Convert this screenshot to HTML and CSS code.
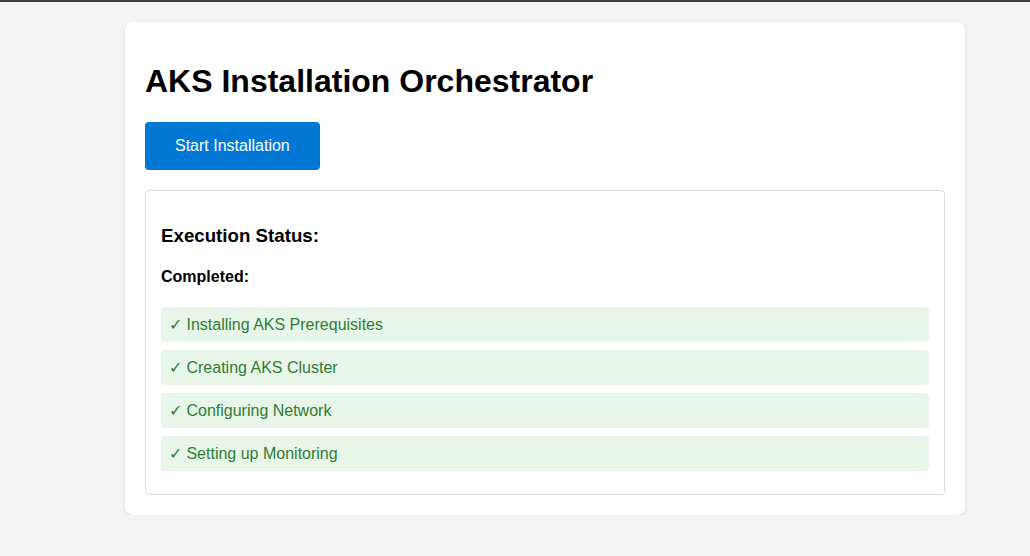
FILE: index.html
```html
<!DOCTYPE html>
<html>
<head>
<meta charset="utf-8">
<link rel="stylesheet" href="styles.css">
</head>
<body>
<div class="topbar"></div>
<div class="page">
  <div class="card">
    <h1 class="title">AKS Installation Orchestrator</h1>
    <button class="start-btn">Start Installation</button>
    <div class="status">
      <h3 class="status-title">Execution Status:</h3>
      <h4 class="status-sub">Completed:</h4>
      <div class="step">✓ Installing AKS Prerequisites</div>
      <div class="step">✓ Creating AKS Cluster</div>
      <div class="step">✓ Configuring Network</div>
      <div class="step">✓ Setting up Monitoring</div>
    </div>
  </div>
</div>
</body>
</html>
```

FILE: styles.css
```css
html, body {
  margin: 0;
  padding: 0;
  background: #f4f4f4;
  font-family: "Liberation Sans", Arial, sans-serif;
}
.topbar {
  height: 2px;
  background: #3c3c3c;
}
.page {
  padding: 20px 0 0 125px;
}
.card {
  width: 800px;
  padding: 20px;
  background: #ffffff;
  border-radius: 8px;
  box-shadow: 0 2px 4px rgba(0, 0, 0, 0.1);
}
.title {
  font-size: 32px;
  font-weight: bold;
  margin: 21.44px 0;
  color: #000;
}
.start-btn {
  display: block;
  font-family: "Liberation Sans", Arial, sans-serif;
  font-size: 16px;
  padding: 15px 30px;
  background: #0078d4;
  color: #ffffff;
  border: none;
  border-radius: 4px;
  line-height: 18px;
}
.status {
  margin-top: 20px;
  padding: 15px;
  border: 1px solid #dddddd;
  border-radius: 4px;
}
.status-title {
  font-size: 18.72px;
  margin: 18.72px 0;
}
.status-sub {
  font-size: 16px;
  margin: 21.28px 0;
}
.step {
  padding: 8px;
  margin: 8px 0;
  background: #e8f5e9;
  color: #2e7d32;
  border-radius: 4px;
  font-size: 16px;
}
```
